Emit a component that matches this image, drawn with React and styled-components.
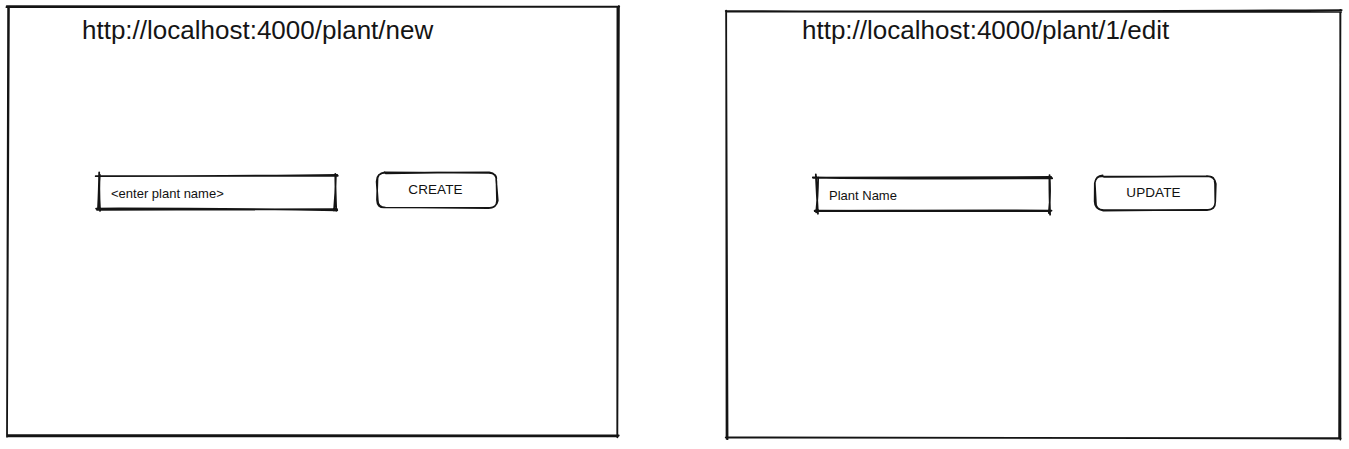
import React from "react";
import styled, { createGlobalStyle } from "styled-components";

const Global = createGlobalStyle`
  html, body { margin: 0; padding: 0; background: #ffffff; }
  body { font-family: "Liberation Sans", Arial, Helvetica, sans-serif; color: #111; }
`;

const Page = styled.div`
  display: flex;
  align-items: flex-start;
  gap: 109px;
  padding: 7px 0 0 8px;
  width: 1349px;
  height: 449px;
  box-sizing: border-box;
  overflow: hidden;
`;

const Frame = styled.section`
  position: relative;
  box-sizing: border-box;
  width: ${(p) => p.$w}px;
  height: ${(p) => p.$h}px;
  margin-top: ${(p) => p.$mt}px;
  padding: ${(p) => p.$pt}px 0 0 ${(p) => p.$pl}px;
  display: flex;
  flex-direction: column;
`;

const Url = styled.h1`
  margin: 0;
  font-family: "Liberation Sans", Arial, Helvetica, sans-serif;
  font-weight: 400;
  font-size: 26px;
  line-height: 30px;
  color: #151515;
  white-space: nowrap;
`;

const Row = styled.div`
  display: flex;
  align-items: flex-start;
  margin-top: ${(p) => p.$mt}px;
  padding-left: ${(p) => p.$pl}px;
  gap: ${(p) => p.$gap}px;
`;

const Field = styled.div`
  position: relative;
  box-sizing: border-box;
  width: ${(p) => p.$w}px;
  height: ${(p) => p.$h}px;
  margin-top: ${(p) => p.$offset}px;
  display: flex;
  align-items: center;
  padding: 1px 0 0 12px;
  font-size: 13px;
  color: #111;
  white-space: nowrap;
`;

const Button = styled.div`
  position: relative;
  box-sizing: border-box;
  width: ${(p) => p.$w}px;
  height: ${(p) => p.$h}px;
  display: flex;
  align-items: center;
  justify-content: center;
  padding: 0 3px 2px 0;
  font-size: 13.5px;
  color: #111;
  letter-spacing: 0.1px;
`;

const SketchSvg = styled.svg`
  position: absolute;
  left: -10px;
  top: -10px;
  pointer-events: none;
  overflow: visible;
`;

function makeRng(seed) {
  let s = seed % 2147483647;
  if (s <= 0) s += 2147483646;
  return () => {
    s = (s * 16807) % 2147483647;
    return ((s - 1) / 2147483646) * 2 - 1;
  };
}

function roughLine(x1, y1, x2, y2, r, j, bow, over) {
  const dx = x2 - x1;
  const dy = y2 - y1;
  const len = Math.hypot(dx, dy) || 1;
  const ux = dx / len;
  const uy = dy / len;
  const px = -uy;
  const py = ux;
  const o1 = over * (0.5 + Math.abs(r()));
  const o2 = over * (0.5 + Math.abs(r()));
  const sx = x1 - ux * o1 + r() * j;
  const sy = y1 - uy * o1 + r() * j;
  const ex = x2 + ux * o2 + r() * j;
  const ey = y2 + uy * o2 + r() * j;
  const t = 0.3 + Math.abs(r()) * 0.4;
  const b = r() * bow;
  const mx = x1 + dx * t + px * b;
  const my = y1 + dy * t + py * b;
  return `M${sx.toFixed(2)} ${sy.toFixed(2)} Q${mx.toFixed(2)} ${my.toFixed(2)} ${ex.toFixed(2)} ${ey.toFixed(2)}`;
}

function rectPath(w, h, seed, j, bow, over) {
  const r = makeRng(seed);
  const parts = [];
  for (let pass = 0; pass < 2; pass++) {
    parts.push(roughLine(0, 0, w, 0, r, j, bow, over));
    parts.push(roughLine(w, 0, w, h, r, j, bow, over));
    parts.push(roughLine(w, h, 0, h, r, j, bow, over));
    parts.push(roughLine(0, h, 0, 0, r, j, bow, over));
  }
  return parts.join(" ");
}

function roundPath(w, h, rad, seed, j) {
  const r = makeRng(seed);
  const parts = [];
  for (let pass = 0; pass < 2; pass++) {
    const q = () => r() * j;
    parts.push(
      `M${(rad + q()).toFixed(2)} ${q().toFixed(2)} ` +
        `Q${w / 2} ${q().toFixed(2)} ${(w - rad + q()).toFixed(2)} ${q().toFixed(2)} ` +
        `Q${(w + q()).toFixed(2)} ${q().toFixed(2)} ${(w + q()).toFixed(2)} ${(rad + q()).toFixed(2)} ` +
        `L${(w + q()).toFixed(2)} ${(h - rad + q()).toFixed(2)} ` +
        `Q${(w + q()).toFixed(2)} ${(h + q()).toFixed(2)} ${(w - rad + q()).toFixed(2)} ${(h + q()).toFixed(2)} ` +
        `Q${w / 2} ${(h + q()).toFixed(2)} ${(rad + q()).toFixed(2)} ${(h + q()).toFixed(2)} ` +
        `Q${q().toFixed(2)} ${(h + q()).toFixed(2)} ${q().toFixed(2)} ${(h - rad + q()).toFixed(2)} ` +
        `L${q().toFixed(2)} ${(rad + q()).toFixed(2)} ` +
        `Q${q().toFixed(2)} ${q().toFixed(2)} ${(rad + q() + 0.5).toFixed(2)} ${q().toFixed(2)}`
    );
  }
  return parts.join(" ");
}

function Sketch({ w, h, seed = 7, kind = "rect", jitter = 1, bow = 1, over = 0, width = 1.4, radius = 8 }) {
  const d = kind === "round" ? roundPath(w, h, radius, seed, jitter) : rectPath(w, h, seed, jitter, bow, over);
  return (
    <SketchSvg width={w + 20} height={h + 20} viewBox={`-10 -10 ${w + 20} ${h + 20}`} aria-hidden="true">
      <path d={d} fill="none" stroke="#141414" strokeWidth={width} strokeLinecap="round" strokeLinejoin="round" />
    </SketchSvg>
  );
}

function Screen({ frame, url, field, button }) {
  return (
    <Frame $w={frame.w} $h={frame.h} $mt={frame.mt} $pt={frame.pt} $pl={frame.pl}>
      <Sketch w={frame.w} h={frame.h} seed={frame.seed} jitter={1} bow={1.2} over={0.6} width={1.8} />
      <Url>{url}</Url>
      <Row $mt={frame.rowMt} $pl={frame.rowPl} $gap={frame.gap}>
        <Field $w={field.w} $h={field.h} $offset={field.offset}>
          <Sketch w={field.w} h={field.h} seed={field.seed} jitter={1.3} bow={1} over={2} width={1.8} />
          {field.text}
        </Field>
        <Button $w={button.w} $h={button.h}>
          <Sketch w={button.w} h={button.h} seed={button.seed} kind="round" jitter={0.9} width={1.6} radius={8} />
          {button.text}
        </Button>
      </Row>
    </Frame>
  );
}

export default function App() {
  return (
    <>
      <Global />
      <Page>
        <Screen
          frame={{ w: 610, h: 429, mt: 0, pt: 8, pl: 74, rowMt: 128, rowPl: 17, gap: 42, seed: 11 }}
          url="http://localhost:4000/plant/new"
          field={{ w: 236, h: 33, offset: 3, text: "<enter plant name>", seed: 23 }}
          button={{ w: 120, h: 35, text: "CREATE", seed: 31 }}
        />
        <Screen
          frame={{ w: 613, h: 427, mt: 4, pt: 4, pl: 75, rowMt: 131, rowPl: 15, gap: 45, seed: 41 }}
          url="http://localhost:4000/plant/1/edit"
          field={{ w: 233, h: 33, offset: 2, text: "Plant Name", seed: 53 }}
          button={{ w: 120, h: 34, text: "UPDATE", seed: 67 }}
        />
      </Page>
    </>
  );
}
